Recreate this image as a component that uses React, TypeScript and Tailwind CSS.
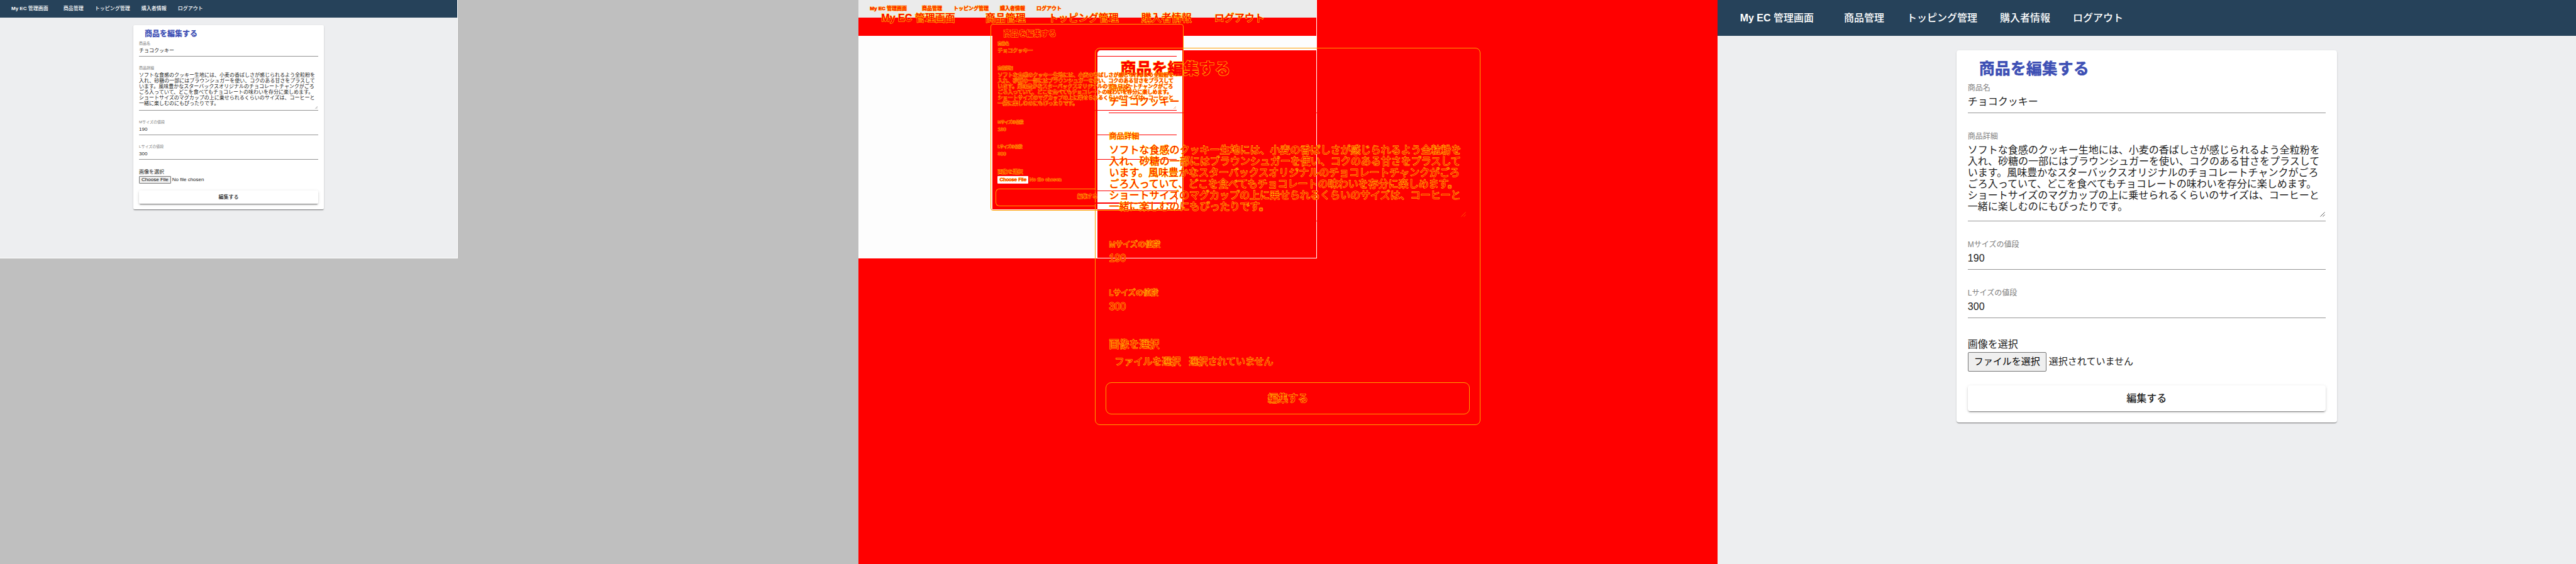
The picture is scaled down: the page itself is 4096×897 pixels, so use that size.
import { useId } from "react";
import clsx from "clsx";

type Size = "sm" | "lg";
type Tone = "live" | "diff";

const DESCRIPTION =
  "ソフトな食感のクッキー生地には、小麦の香ばしさが感じられるよう全粒粉を入れ、砂糖の一部にはブラウンシュガーを使い、コクのある甘さをプラスしています。風味豊かなスターバックスオリジナルのチョコレートチャンクがごろごろ入っていて、どこを食べてもチョコレートの味わいを存分に楽しめます。ショートサイズのマグカップの上に乗せられるくらいのサイズは、コーヒーと一緒に楽しむのにもぴったりです。";

const NAV_ITEMS = ["商品管理", "トッピング管理", "購入者情報", "ログアウト"];

const SIZES = {
  sm: {
    nav: "h-7 pl-[18px] text-[8px]",
    brand: "mr-6",
    links: "gap-[18px]",
    card: "mt-3 w-[303px] px-[9px] pt-[5px] pb-[9px] rounded-[2px]",
    title: "pl-[9px] text-[12px] leading-[18px]",
    fields: "mt-0.5 gap-3.5",
    label: "text-[6px] leading-[9px]",
    value: "pt-0.5 text-[8px] leading-[9px]",
    inputPad: "pb-1",
    areaPad: "pb-1.5",
    grip: "right-px bottom-[3px] size-1",
    fileLabel: "mt-[15px] text-[8px] leading-[10px]",
    fileRow: "mt-px h-3 gap-[2px] text-[8px]",
    fileButton: "px-[3px] rounded-[1px]",
    submit: "mt-[11px] h-[21px] rounded-[2px] text-[8px]",
  },
  lg: {
    nav: "h-[57px] pl-9 text-[16px]",
    brand: "mr-12",
    links: "gap-9",
    card: "mt-[23px] w-[605px] px-[18px] pt-[11px] pb-[18px] rounded-[4px]",
    title: "pl-[18px] text-[25px] leading-[36px]",
    fields: "mt-1 gap-7",
    label: "text-[12px] leading-[18px]",
    value: "pt-1 text-[16px] leading-[18px]",
    inputPad: "pb-2",
    areaPad: "pb-[13px]",
    grip: "right-px bottom-[7px] size-2",
    fileLabel: "mt-8 text-[16px] leading-[20px]",
    fileRow: "mt-0.5 h-[31px] gap-1 text-[15px]",
    fileButton: "px-[9px] rounded-[2px]",
    submit: "mt-[22px] h-[41px] rounded-[4px] text-[16px]",
  },
};

const TONES = {
  live: {
    nav: "bg-[#26425a] text-white",
    main: "bg-[#edeef0]",
    card: "bg-white shadow-[0_2px_1px_-1px_rgba(0,0,0,0.3),0_1px_1px_rgba(0,0,0,0.2),0_1px_3px_rgba(0,0,0,0.12)]",
    title: "text-[#3f51b5]",
    label: "text-[#808080]",
    value: "text-[#212121] border-[#949494]",
    text: "text-[#212121]",
    grip: "text-[#555555]",
    fileButton: "border border-[#767676] bg-[#efefef] text-black",
    submit:
      "bg-white text-[#212121] shadow-[0_3px_1px_-2px_rgba(0,0,0,0.3),0_2px_2px_rgba(0,0,0,0.16),0_1px_5px_rgba(0,0,0,0.12)]",
  },
  diff: {
    nav: "",
    main: "",
    card: "outline outline-1 outline-[#ffa000]",
    title: "",
    label: "",
    value: "border-[#ff0000]",
    text: "",
    grip: "text-[#ff5000]",
    fileButton: "",
    submit: "",
  },
};

function ProductPage({ size, tone, pick, none }: { size: Size; tone: Tone; pick: string; none: string }) {
  const s = SIZES[size];
  const t = TONES[tone];
  const id = useId();
  const diff = tone === "diff";
  const small = size === "sm";

  const textField = (key: string, label: string, value: string) => (
    <div className="flex flex-col">
      <label htmlFor={id + key} className={clsx("block", s.label, t.label)}>
        {label}
      </label>
      <input
        id={id + key}
        type="text"
        defaultValue={value}
        className={clsx("block w-full border-b bg-transparent outline-none", s.value, s.inputPad, t.value)}
      />
    </div>
  );

  return (
    <div
      className={clsx(
        "flex min-w-0 flex-col",
        small ? "h-[411px] w-8/15 border-r border-b border-white" : "min-h-screen w-full",
        diff && "text-[#ff0000] [paint-order:stroke_fill]",
        diff && (small ? "[-webkit-text-stroke:1px_#ffb000]" : "[-webkit-text-stroke:1px_#ffee00]"),
      )}
    >
      <nav className={clsx("flex shrink-0 items-center whitespace-nowrap font-medium", s.nav, t.nav)}>
        <a href="#home" className={s.brand}>
          <span className="font-bold">My EC</span> 管理画面
        </a>
        <div className={clsx("flex", s.links)}>
          {NAV_ITEMS.map((item) => (
            <a key={item} href="#menu">
              {item}
            </a>
          ))}
        </div>
      </nav>
      <main className={clsx("flex flex-1 items-start justify-center", t.main)}>
        <form
          className={clsx(
            "flex flex-col",
            s.card,
            t.card,
            diff && (small ? "outline-offset-1" : "outline-offset-3"),
          )}
          onSubmit={(e) => e.preventDefault()}
        >
          <h1 className={clsx("font-black", s.title, t.title)}>商品を編集する</h1>
          <div className={clsx("flex flex-col", s.fields)}>
            {textField("name", "商品名", "チョコクッキー")}
            <div className="relative flex flex-col">
              <label htmlFor={id + "detail"} className={clsx("block", s.label, t.label)}>
                商品詳細
              </label>
              <textarea
                id={id + "detail"}
                rows={6}
                defaultValue={DESCRIPTION}
                className={clsx(
                  "block w-full resize-none overflow-hidden border-b bg-transparent outline-none",
                  s.value,
                  s.areaPad,
                  t.value,
                )}
              />
              <svg viewBox="0 0 8 8" className={clsx("absolute", s.grip, t.grip)} aria-hidden="true">
                <path d="M0.5 7.5 7.5 0.5M4.5 7.5 7.5 4.5" stroke="currentColor" fill="none" />
              </svg>
            </div>
            {textField("m", "Mサイズの値段", "190")}
            {textField("l", "Lサイズの値段", "300")}
          </div>
          <span className={clsx("block", s.fileLabel, t.text)}>画像を選択</span>
          <label className={clsx("relative flex items-stretch whitespace-nowrap", s.fileRow, t.text)}>
            <span
              className={clsx("flex items-center", s.fileButton, t.fileButton, diff && small && "bg-white")}
            >
              {pick}
            </span>
            <span className="flex items-center">{none}</span>
            <input type="file" aria-label="画像を選択" className="absolute inset-0 opacity-0" />
          </label>
          <button
            type="submit"
            className={clsx(
              "relative w-full font-medium",
              s.submit,
              t.submit,
              diff &&
                (small
                  ? "border border-b-2 border-[#ff0000] before:absolute before:-top-1 before:-bottom-1.5 before:-left-1 before:w-[159px] before:rounded-l-[6px] before:border before:border-r-0 before:border-[#ffa000]"
                  : "outline outline-1 outline-offset-4 outline-[#ffa000]"),
            )}
          >
            編集する
          </button>
        </form>
      </main>
    </div>
  );
}

function DiffPanel() {
  return (
    <section className="grid min-w-0 bg-[#ff0000]">
      <div className="flex h-[410px] w-8/15 flex-col [grid-area:1/1]" aria-hidden="true">
        <div className="h-7 bg-[#ebebeb]" />
        <div className="h-[29px]" />
        <div className="flex flex-1 items-start justify-center bg-[#fdfdfd]">
          <div className="h-[276px] w-[303px] bg-[#ff0000]" />
        </div>
      </div>
      <div className="flex items-start justify-center pt-20 [grid-area:1/1]" aria-hidden="true">
        <div className="h-[592px] w-[605px] rounded-[4px] bg-[#ff0000]">
          <div className="h-[253px] w-[135px] rounded-tl-[5px] bg-white" />
        </div>
      </div>
      <div className="min-w-0 [grid-area:1/1]">
        <ProductPage size="sm" tone="diff" pick="Choose File" none="No file chosen" />
      </div>
      <div className="min-w-0 [grid-area:1/1]">
        <ProductPage size="lg" tone="diff" pick="ファイルを選択" none="選択されていません" />
      </div>
    </section>
  );
}

export default function App() {
  return (
    <div className="grid min-h-screen grid-cols-3 overflow-hidden font-['Liberation_Sans','Noto_Sans_CJK_JP',sans-serif]">
      <section className="min-w-0 bg-[#bfbfbf]">
        <ProductPage size="sm" tone="live" pick="Choose File" none="No file chosen" />
      </section>
      <DiffPanel />
      <section className="min-w-0">
        <ProductPage size="lg" tone="live" pick="ファイルを選択" none="選択されていません" />
      </section>
    </div>
  );
}
